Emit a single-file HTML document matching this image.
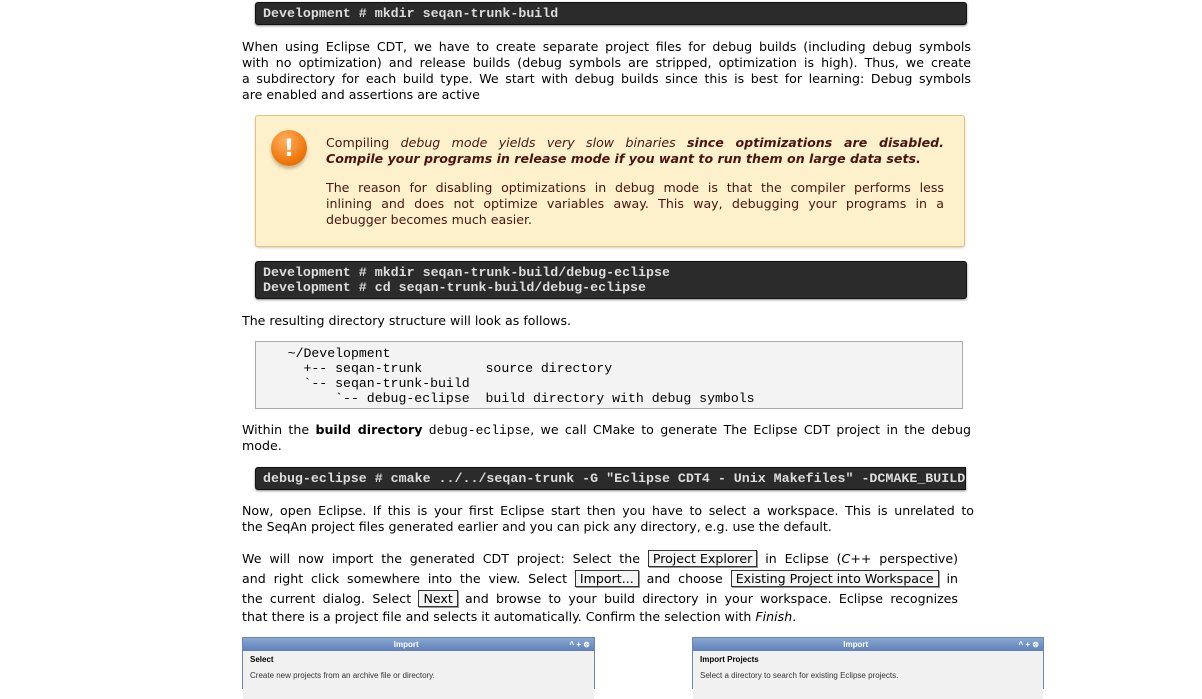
<!DOCTYPE html>
<html><head><meta charset="utf-8"><style>
body{margin:0;width:1202px;height:679px;overflow:hidden;background:#fff;font-family:"DejaVu Sans","Liberation Sans",sans-serif;font-size:12.6px;color:#000;position:relative}
.a{position:absolute}
.code{position:absolute;left:255px;width:696px;background:#2b2b2b;border:1px solid #111;border-radius:3px;color:#ddd;font-family:"Liberation Mono",monospace;font-weight:bold;font-size:13.3px;line-height:15px;padding:3px 7px;white-space:pre;overflow:hidden;box-shadow:0 1px 2px #888}
.p div{text-align:justify;text-align-last:justify;white-space:nowrap;height:16px;line-height:16px}
.p div.l{text-align-last:left}
.btn{display:inline-block;border:1px solid #333;background:#f4f4f4;padding:0 4px;line-height:15px;box-shadow:1px 1px 0 #999}
tt{font-family:"Liberation Mono",monospace;font-size:13px}
.win{position:absolute;top:637px;height:50px;border:1px solid #6b85ad;background:#fff;font-size:8px;font-family:"Liberation Sans",sans-serif}
.win .t{background:linear-gradient(#8aa8d4,#5e80b8);color:#fff;height:13px;line-height:13px;text-align:center;font-weight:bold}
.win .s{background:#f1f1f1;height:40px;padding:4px 7px;font-weight:bold}
.win .s div{font-weight:normal;margin-top:7px;color:#333}
</style></head><body>
<div class="code" style="top:2px;height:15px">Development # mkdir seqan-trunk-build</div>
<div class="a p" style="left:242px;width:729px;top:39px">
<div>When using Eclipse CDT, we have to create separate project files for debug builds (including debug symbols</div>
<div>with no optimization) and release builds (debug symbols are stripped, optimization is high). Thus, we create</div>
<div>a subdirectory for each build type. We start with debug builds since this is best for learning: Debug symbols</div>
<div class="l">are enabled and assertions are active</div></div>
<div class="a" style="left:255px;top:115px;width:708px;height:130px;background:#fdf1cc;border:1px solid #e6c17c;border-radius:3px;box-shadow:0 1px 2px #ccc"></div>
<div class="a" style="left:271px;top:130px;width:36px;height:36px;border-radius:50%;background:radial-gradient(circle at 40% 30%,#ffb060,#f07a10 60%,#d86000);color:#fff;font-weight:bold;font-size:24px;text-align:center;line-height:36px;box-shadow:0 3px 3px #c9b88f">!</div>
<div class="a p" style="left:326px;width:618px;top:135px;color:#4a1410">
<div>Compiling <i>debug mode yields very slow binaries</i> <b><i>since optimizations are disabled.</i></b></div>
<div class="l"><b><i>Compile your programs in release mode if you want to run them on large data sets.</i></b></div></div>
<div class="a p" style="left:326px;width:618px;top:180px;color:#4a1410">
<div>The reason for disabling optimizations in debug mode is that the compiler performs less</div>
<div>inlining and does not optimize variables away. This way, debugging your programs in a</div>
<div class="l">debugger becomes much easier.</div></div>
<div class="code" style="top:261px;height:30px">Development # mkdir seqan-trunk-build/debug-eclipse
Development # cd seqan-trunk-build/debug-eclipse</div>
<div class="a p" style="left:242px;top:313px"><div class="l">The resulting directory structure will look as follows.</div></div>
<div class="a" style="left:255px;top:341px;width:708px;height:68px;box-sizing:border-box;background:#f3f3f3;border:1px solid #aaa;font-family:'Liberation Mono',monospace;font-size:13.2px;line-height:15px;white-space:pre;padding-top:4px">    ~/Development
      +-- seqan-trunk        source directory
      `-- seqan-trunk-build
          `-- debug-eclipse  build directory with debug symbols</div>
<div class="a p" style="left:242px;width:729px;top:422px">
<div>Within the <b>build directory</b> <tt>debug-eclipse</tt>, we call CMake to generate The Eclipse CDT project in the debug</div>
<div class="l">mode.</div></div>
<div class="code" style="top:467px;height:15px;width:695px;border-radius:3px 0 0 3px">debug-eclipse # cmake ../../seqan-trunk -G "Eclipse CDT4 - Unix Makefiles" -DCMAKE_BUILD_TYPE=Debug</div>
<div class="a p" style="left:242px;width:732px;top:503px">
<div>Now, open Eclipse. If this is your first Eclipse start then you have to select a workspace. This is unrelated to</div>
<div class="l">the SeqAn project files generated earlier and you can pick any directory, e.g. use the default.</div></div>
<div class="a p" style="left:242px;width:716px;top:550px">
<div style="height:20px;line-height:17px">We will now import the generated CDT project: Select the <span class="btn">Project Explorer</span> in Eclipse (<i>C++</i> perspective)</div>
<div style="height:20px;line-height:17px">and right click somewhere into the view. Select <span class="btn">Import...</span> and choose <span class="btn">Existing Project into Workspace</span> in</div>
<div style="height:19px;line-height:17px">the current dialog. Select <span class="btn">Next</span> and browse to your build directory in your workspace. Eclipse recognizes</div>
<div class="l">that there is a project file and selects it automatically. Confirm the selection with <i>Finish</i>.</div></div>
<div class="win" style="left:242px;width:351px"><div class="t">Import<span style="float:right;padding-right:4px">^ + ⊗</span></div><div class="s">Select<div>Create new projects from an archive file or directory.</div></div></div>
<div class="win" style="left:692px;width:350px"><div class="t">Import<span style="float:right;padding-right:4px">^ + ⊗</span></div><div class="s">Import Projects<div>Select a directory to search for existing Eclipse projects.</div></div></div>
</body></html>
